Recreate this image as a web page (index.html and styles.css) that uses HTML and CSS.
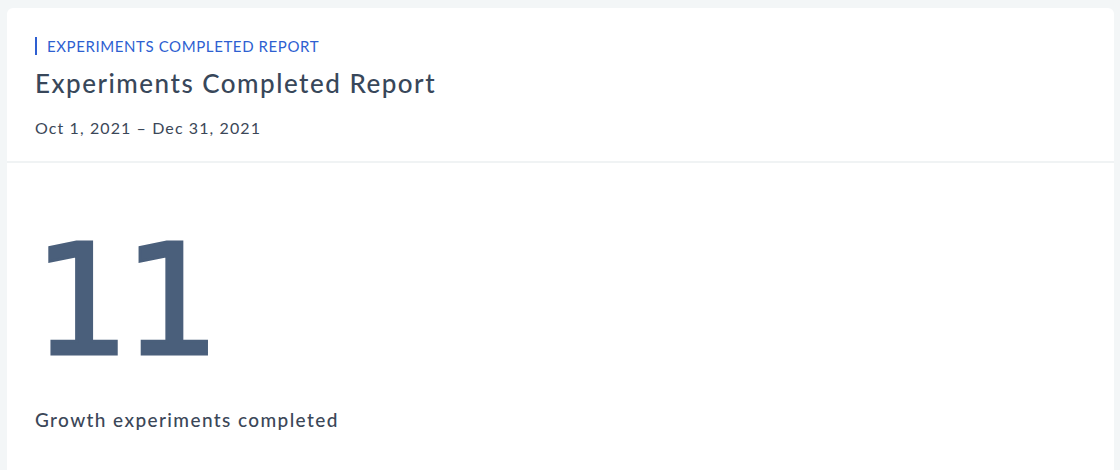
FILE: index.html
```html
<!DOCTYPE html>
<html lang="en">
<head>
<meta charset="utf-8">
<title>Experiments Completed Report</title>
<link rel="stylesheet" href="styles.css">
</head>
<body>
<div class="page">
  <section class="card">
    <header class="card-header">
      <div class="eyebrow">EXPERIMENTS COMPLETED REPORT</div>
      <h1 class="title">Experiments Completed Report</h1>
      <div class="range">Oct 1, 2021 – Dec 31, 2021</div>
    </header>
    <div class="card-body">
      <div class="metric">11</div>
      <div class="caption">Growth experiments completed</div>
    </div>
  </section>
</div>
</body>
</html>
```
FILE: styles.css
```css
html, body {
  margin: 0;
  padding: 0;
  height: 100%;
  background: #f3f6f7;
  font-family: "Lato", "Open Sans", sans-serif;
  color: #3b4758;
  overflow: hidden;
}
.page {
  padding: 8px 6px 0 7px;
}
.card {
  background: #ffffff;
  border-radius: 6px;
  min-height: 480px;
}
.card-header {
  padding: 29px 28px 0 28px;
  height: 124px;
  border-bottom: 2px solid #f0f3f4;
}
.eyebrow {
  border-left: 2px solid #2e5fd1;
  padding-left: 10px;
  color: #2e5fd1;
  font-size: 15px;
  font-weight: 400;
  line-height: 18px;
  letter-spacing: 0.6px;
}
.title {
  margin: 13px 0 0 0;
  font-size: 26px;
  font-weight: 500;
  line-height: 30px;
  letter-spacing: 1.5px;
  color: #38475a;
}
.range {
  margin-top: 20px;
  font-size: 16px;
  font-weight: 400;
  line-height: 20px;
  letter-spacing: 1.1px;
  color: #3b4758;
}
.card-body {
  padding: 53px 28px 0 28px;
}
.metric {
  font-family: "DejaVu Sans", sans-serif;
  font-weight: 400;
  font-size: 153px;
  line-height: 170px;
  letter-spacing: -7px;
  margin-left: -2px;
  color: #4a5f7b;
  -webkit-text-stroke: 3px #4a5f7b;
}
.caption {
  margin-top: 23px;
  font-size: 19px;
  font-weight: 500;
  line-height: 22px;
  letter-spacing: 1.4px;
  color: #3b4758;
}
```
